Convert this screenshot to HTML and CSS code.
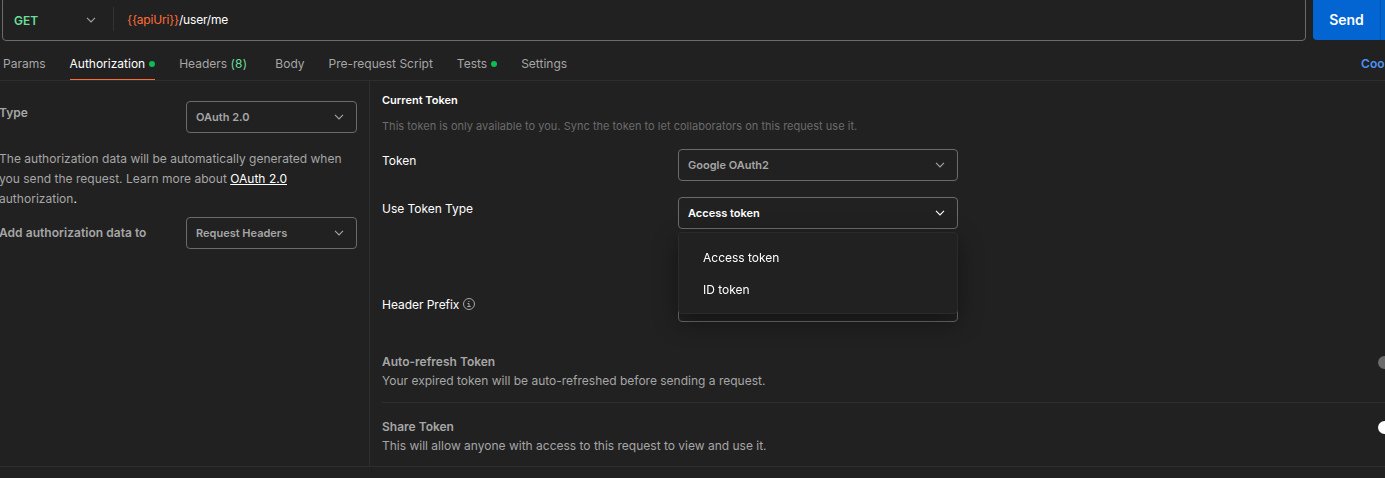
FILE: index.html
```html
<!DOCTYPE html>
<html lang="en">
<head>
<meta charset="utf-8">
<title>Request authorization</title>
<link rel="stylesheet" href="styles.css">
</head>
<body>
<svg class="defs"><symbol id="chevron" viewBox="0 0 10 6"><path d="M1 .9 5 4.9 9 .9" fill="none" stroke="currentColor" stroke-width="1.1"/></symbol></svg>
<div class="app">
  <header class="request">
    <div class="url-box">
      <div class="method"><span>GET</span><svg class="chev"><use href="#chevron"/></svg></div>
      <div class="url"><span class="var">{{apiUri}}</span>/user/me</div>
    </div>
    <div class="send"><span class="send-main">Send</span><span class="send-more"></span></div>
  </header>
  <nav class="tabs">
    <span class="tab">Params</span>
    <span class="tab active">Authorization<i class="dot"></i></span>
    <span class="tab headers">Headers <b class="count">(8)</b></span>
    <span class="tab">Body</span>
    <span class="tab">Pre-request Script</span>
    <span class="tab">Tests<i class="dot"></i></span>
    <span class="tab">Settings</span>
    <span class="cookies">Coo</span>
  </nav>
  <main class="content">
    <section class="side">
      <div class="side-row type-row"><span class="side-label">Type</span><div class="select"><span>OAuth 2.0</span><svg class="chev"><use href="#chevron"/></svg></div></div>
      <p class="help">The authorization data will be automatically generated when you send the request. Learn more about <a class="link">OAuth 2.0</a> authorization<span class="stop">.</span></p>
      <div class="side-row"><span class="side-label">Add authorization data to</span><div class="select"><span>Request Headers</span><svg class="chev"><use href="#chevron"/></svg></div></div>
    </section>
    <section class="main">
      <h3 class="heading">Current Token</h3>
      <p class="note">This token is only available to you. Sync the token to let collaborators on this request use it.</p>
      <div class="field"><span class="label">Token</span><div class="select"><span>Google OAuth2</span><svg class="chev"><use href="#chevron"/></svg></div></div>
      <div class="field type-field"><span class="label">Use Token Type</span>
        <div class="select open"><span>Access token</span><svg class="chev"><use href="#chevron"/></svg>
          <div class="menu"><div class="option">Access token</div><div class="option">ID token</div></div>
        </div>
      </div>
      <div class="field prefix-field"><span class="label">Header Prefix<svg class="info" viewBox="0 0 12 12" fill="none" stroke="currentColor"><circle cx="6" cy="6" r="5.5"/><path d="M4.5 5.5H6V8.5M4.3 8.5H7.7M5.3 3.5H6.5"/></svg></span><div class="select"></div></div>
      <div class="setting refresh"><div><h4 class="setting-title">Auto-refresh Token</h4><p class="setting-text">Your expired token will be auto-refreshed before sending a request.</p></div><span class="knob"></span></div>
      <div class="setting share"><div><h4 class="setting-title">Share Token</h4><p class="setting-text">This will allow anyone with access to this request to view and use it.</p></div><span class="knob on"></span></div>
    </section>
  </main>
</div>
</body>
</html>
```
FILE: styles.css
```css
* { box-sizing: border-box; }
body { margin: 0; background: #212121; color: #a6a6a6; font: 12px/20px Inter, sans-serif; overflow: hidden; }
h3, h4, p { margin: 0; }
.defs { display: none; }
.app { width: 1385px; height: 478px; overflow: hidden; }
.chev { width: 10px; height: 6px; flex: none; }

.request { display: flex; height: 41px; padding-left: 2px; gap: 7px; }
.url-box { display: flex; align-items: center; width: 1304px; height: 44px; margin-top: -3px; flex: none; border: 1px solid #6b6b6b; border-radius: 4px; }
.method { display: flex; align-items: center; justify-content: space-between; width: 111px; height: 24px; padding: 3px 17px 0 11px; border-right: 1px solid #333; color: #6bdd9a; font-weight: 600; }
.method .chev { color: #a6a6a6; margin-top: -1px; }
.url { padding-left: 13px; color: #fff; padding-top: 1px; letter-spacing: -.2px; }
.var { color: #ff6c37; }
.send { display: flex; flex: none; width: 92px; height: 43px; margin-top: -3px; border-radius: 4px; background: #0265d2; color: #fff; font-size: 14px; font-weight: 600; }
.send-main { display: flex; align-items: center; justify-content: center; width: 68px; padding-top: 3px; border-right: 1px solid #0453ab; }

.tabs { display: flex; height: 40px; padding-left: 3px; gap: 24px; border-bottom: 1px solid #2e2e2e; }
.tab { display: flex; align-items: center; height: 39px; padding-top: 6px; flex: none; white-space: pre; }
.active { padding-top: 7px; color: #fff; border-bottom: 1px solid #ff6c37; }
.dot { width: 6px; height: 6px; margin-left: 4px; border-radius: 50%; background: #0cbb52; }
.headers { margin-right: 4px; }
.count { font-weight: 400; color: #6bdd9a; letter-spacing: .2px; }
.cookies { margin-left: 770px; padding-top: 13px; color: #4a93f5; font-weight: 600; flex: none; }

.content { display: flex; height: 386px; border-bottom: 1px solid #2e2e2e; }
.side { width: 370px; padding: 20px 12px 0 0; flex: none; border-right: 1px solid #2e2e2e; }
.side-row { display: flex; justify-content: space-between; align-items: center; margin-left: -1px; }
.type-row { align-items: flex-start; }
.type-row .side-label { padding-top: 2px; }
.side-label { font-weight: 600; letter-spacing: .04px; }
.side-row .select { width: 171px; }
.select { display: flex; justify-content: space-between; align-items: center; width: 280px; height: 32px; padding: 0 12px 0 9px; border: 1px solid #6b6b6b; border-radius: 4px; font-size: 11px; font-weight: 600; }
.help { margin: 16px 0 8px -1px; width: 350px; letter-spacing: .02px; }
.link { color: #fff; text-decoration: underline; }
.stop { color: #fff; }

.main { width: 1015px; padding: 9px 0 0 12px; flex: none; }
.heading { color: #fff; font-size: 11px; font-weight: 600; }
.note { margin-top: 6px; color: #6b6b6b; font-size: 11px; letter-spacing: .02px; }
.field { display: grid; grid-template-columns: 296px 280px; margin-top: 13px; }
.type-field { margin-top: 16px; }
.prefix-field { margin-top: 61px; }
.label { display: flex; align-items: center; height: 20px; padding: 0; margin-top: 2px; color: #fff; letter-spacing: -.04px; }
.prefix-field .label { margin-top: 5px; }
.info { width: 12px; height: 12px; margin: -2px 0 0 3.5px; color: #a6a6a6; }
.open { position: relative; color: #fff; }
.menu { position: absolute; z-index: 2; top: 34px; left: -1px; width: 280px; height: 82px; padding: 9px 0; border: 1px solid #2b2b2b; border-radius: 4px; background: #212121; box-shadow: 0 8px 24px rgba(0, 0, 0, .4); font-size: 12px; font-weight: 400; will-change: transform; }
.option { height: 32px; padding-left: 24px; line-height: 32px; }

.setting { display: flex; justify-content: space-between; align-items: flex-start; margin-right: -6px; }
.refresh { margin-top: 30px; padding-bottom: 11px; border-bottom: 1px solid #2e2e2e; }
.share { margin-top: 14px; }
.setting-title { font-size: 12px; font-weight: 600; }
.setting-text { margin-top: -1px; }
.knob { width: 13px; height: 13px; margin-top: 4px; border-radius: 50%; background: #6b6b6b; flex: none; }
.on { background: #fff; }
```
